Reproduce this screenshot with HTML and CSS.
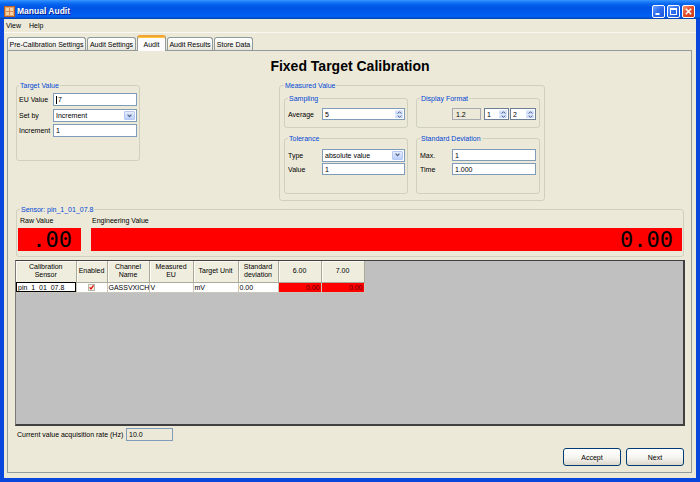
FILE: index.html
```html
<!DOCTYPE html>
<html>
<head>
<meta charset="utf-8">
<title>Manual Audit</title>
<link rel="stylesheet" href="styles.css">
</head>
<body>
<div class="window">
  <div class="titlebar">
    <svg class="app-icon" width="11" height="11" viewBox="0 0 11 11">
      <rect x="0.5" y="0.5" width="10" height="10" fill="#e9a46a" stroke="#b4622a"/>
      <rect x="2" y="2" width="7" height="7" fill="#f6d3a8"/>
      <path d="M2 5.5h7M5.5 2v7" stroke="#d98a4a" stroke-width="1"/>
    </svg>
    <span class="title">Manual Audit</span>
    <div class="tb-buttons">
      <span class="tb-btn"><svg width="11" height="11" viewBox="0 0 11 11"><rect x="2.5" y="7" width="4" height="2" fill="#fff"/></svg></span>
      <span class="tb-btn"><svg width="11" height="11" viewBox="0 0 11 11"><rect x="2.5" y="2.5" width="6" height="6" fill="none" stroke="#fff" stroke-width="1"/><rect x="2" y="2" width="7" height="2" fill="#fff"/></svg></span>
      <span class="tb-btn close"><svg width="11" height="11" viewBox="0 0 11 11"><path d="M2.8 2.8l5.4 5.4M8.2 2.8l-5.4 5.4" stroke="#fff" stroke-width="1.6"/></svg></span>
    </div>
  </div>
  <div class="frame">
    <div class="menubar"><span>View</span><span>Help</span></div>
    <div class="tabs">
      <div class="tab t1">Pre-Calibration Settings</div>
      <div class="tab t2">Audit Settings</div>
      <div class="tab t3 active">Audit</div>
      <div class="tab t4">Audit Results</div>
      <div class="tab t5">Store Data</div>
    </div>
    <div class="panel">
      <h1 class="heading">Fixed Target Calibration</h1>
      <div class="top-row">
        <fieldset class="group target-group">
          <legend>Target Value</legend>
          <div class="field-row"><span class="lbl">EU Value</span><span class="textbox w84"><span class="caret"></span>7</span></div>
          <div class="field-row mt3"><span class="lbl">Set by</span>
            <span class="combo w84"><span class="combo-val">Increment</span><span class="combo-btn"><svg width="5" height="4" viewBox="0 0 5 4"><path d="M0.6 0.7L2.5 2.7L4.4 0.7" fill="none" stroke="#4d6185" stroke-width="1.2"/></svg></span></span>
          </div>
          <div class="field-row mt2"><span class="lbl">Increment</span><span class="textbox w84">1</span></div>
        </fieldset>
        <fieldset class="group measured-group">
          <legend>Measured Value</legend>
          <div class="sub-grid">
            <fieldset class="group sub short">
              <legend>Sampling</legend>
              <div class="field-row h12"><span class="lbl">Average</span>
                <span class="spin w83"><span class="spin-val">5</span><span class="spin-btns"><span class="sb"><svg width="5" height="3" viewBox="0 0 5 3"><path d="M0.7 2.5L2.5 0.7L4.3 2.5" fill="none" stroke="#4d6185" stroke-width="1"/></svg></span><span class="sb"><svg width="5" height="3" viewBox="0 0 5 3"><path d="M0.7 0.5L2.5 2.3L4.3 0.5" fill="none" stroke="#4d6185" stroke-width="1"/></svg></span></span></span>
              </div>
            </fieldset>
            <fieldset class="group sub short">
              <legend>Display Format</legend>
              <div class="field-row h12 fmt-row">
                <span class="readonly w29">1.2</span>
                <span class="spin w25 dark"><span class="spin-val">1</span><span class="spin-btns"><span class="sb"><svg width="5" height="3" viewBox="0 0 5 3"><path d="M0.7 2.5L2.5 0.7L4.3 2.5" fill="none" stroke="#4d6185" stroke-width="1"/></svg></span><span class="sb"><svg width="5" height="3" viewBox="0 0 5 3"><path d="M0.7 0.5L2.5 2.3L4.3 0.5" fill="none" stroke="#4d6185" stroke-width="1"/></svg></span></span></span>
                <span class="spin w26 dark"><span class="spin-val">2</span><span class="spin-btns"><span class="sb"><svg width="5" height="3" viewBox="0 0 5 3"><path d="M0.7 2.5L2.5 0.7L4.3 2.5" fill="none" stroke="#4d6185" stroke-width="1"/></svg></span><span class="sb"><svg width="5" height="3" viewBox="0 0 5 3"><path d="M0.7 0.5L2.5 2.3L4.3 0.5" fill="none" stroke="#4d6185" stroke-width="1"/></svg></span></span></span>
              </div>
            </fieldset>
            <fieldset class="group sub tall">
              <legend>Tolerance</legend>
              <div class="field-row h12"><span class="lbl">Type</span>
                <span class="combo w83 h12"><span class="combo-val">absolute value</span><span class="combo-btn"><svg width="5" height="4" viewBox="0 0 5 4"><path d="M0.6 0.7L2.5 2.7L4.4 0.7" fill="none" stroke="#4d6185" stroke-width="1.2"/></svg></span></span>
              </div>
              <div class="field-row h12 mt2"><span class="lbl">Value</span><span class="textbox w83 h12">1</span></div>
            </fieldset>
            <fieldset class="group sub tall stddev">
              <legend>Standard Deviation</legend>
              <div class="field-row h12"><span class="lbl">Max.</span><span class="textbox w84 h12">1</span></div>
              <div class="field-row h12 mt2"><span class="lbl">Time</span><span class="textbox w84 h12">1.000</span></div>
            </fieldset>
          </div>
        </fieldset>
      </div>
      <fieldset class="group sensor-group">
        <legend>Sensor: pin_1_01_07.8</legend>
        <div class="sensor-cols">
          <div class="sensor-col raw">
            <div class="sensor-lbl">Raw Value</div>
            <div class="digital">.00</div>
          </div>
          <div class="sensor-col eng">
            <div class="sensor-lbl eng-lbl">Engineering Value</div>
            <div class="digital">0.00</div>
          </div>
        </div>
      </fieldset>
      <div class="datagrid">
        <table class="grid-table">
          <colgroup>
            <col class="c60"><col class="c31"><col class="c42"><col class="c44"><col class="c45"><col class="c40"><col class="c43"><col class="c43">
          </colgroup>
          <thead>
            <tr>
              <th>Calibration<br>Sensor</th>
              <th>Enabled</th>
              <th>Channel<br>Name</th>
              <th>Measured<br>EU</th>
              <th>Target Unit</th>
              <th>Standard<br>deviation</th>
              <th>6.00</th>
              <th>7.00</th>
            </tr>
          </thead>
          <tbody>
            <tr>
              <td class="focus">pin_1_01_07.8</td>
              <td class="center"><svg class="chk" width="7" height="7" viewBox="0 0 7 7"><rect x="0.5" y="0.5" width="6" height="6" fill="#f3f1e6" stroke="#b9b7a8"/><path d="M1.6 3.4L3 5L5.6 1.4" fill="none" stroke="#e21010" stroke-width="1.3"/></svg></td>
              <td>GASSVXICH</td>
              <td>V</td>
              <td>mV</td>
              <td>0.00</td>
              <td class="red">0.00</td>
              <td class="red">0.00</td>
            </tr>
          </tbody>
        </table>
      </div>
      <div class="rate-row">
        <span class="rate-lbl">Current value acquisition rate (Hz)</span>
        <span class="rate-box">10.0</span>
      </div>
      <div class="btn-row">
        <span class="btn">Accept</span>
        <span class="btn">Next</span>
      </div>
    </div>
  </div>
</div>
</body>
</html>
```
FILE: styles.css
```css
* { box-sizing: border-box; }
html, body { margin: 0; padding: 0; }
body {
  width: 700px;
  height: 482px;
  overflow: hidden;
  font-family: "Liberation Sans", Arial, sans-serif;
  font-size: 7px;
  line-height: 9px;
  color: #000;
  background: #ece9d8;
}
.window {
  width: 700px;
  height: 482px;
  display: flex;
  flex-direction: column;
}
.titlebar {
  flex: none;
  height: 19px;
  display: flex;
  align-items: center;
  padding: 3px 5px 0 4px;
  background: linear-gradient(to bottom, #3d95ff 0%, #1a7cfa 10%, #0564ee 22%, #0055e5 40%, #0057ea 60%, #005cf2 75%, #0063f3 85%, #0052d6 93%, #0040ab 100%);
}
.app-icon { flex: none; margin-right: 2px; }
.title {
  flex: 1;
  color: #fff;
  font-weight: bold;
  font-size: 8.5px;
  line-height: 11px;
  text-shadow: 1px 1px 0 #0a1a8a;
}
.tb-buttons { display: flex; gap: 2px; }
.tb-btn {
  width: 13px;
  height: 13px;
  border: 1px solid #fff;
  border-radius: 2px;
  background: linear-gradient(135deg, #6ea2ff 0%, #2f6ff0 45%, #1c55d8 100%);
  display: flex;
  align-items: center;
  justify-content: center;
}
.tb-btn.close { background: linear-gradient(135deg, #f39a7a 0%, #e2502a 45%, #c93a14 100%); }

.frame {
  flex: 1;
  min-height: 0;
  display: flex;
  flex-direction: column;
  background: #ece9d8;
  border: 4px solid #0846dc;
  border-top: 0;
}
.menubar {
  flex: none;
  height: 14px;
  display: flex;
  align-items: center;
  gap: 8px;
  padding: 0 0 1px 2px;
  border-bottom: 1px solid #f9f8f2;
}
.tabs {
  flex: none;
  height: 17px;
  display: flex;
  align-items: flex-end;
  gap: 1px;
  padding-left: 3px;
}
.tab {
  height: 13px;
  display: flex;
  align-items: center;
  justify-content: center;
  border: 1px solid #919b9c;
  border-bottom: 0;
  border-radius: 3px 3px 0 0;
  background: linear-gradient(#ffffff, #f4f3ee 60%, #e6e4da);
  white-space: nowrap;
}
.tab.active {
  height: 16px;
  margin-bottom: -1px;
  position: relative;
  z-index: 2;
  background: #fcfcfe;
  border-top: 2px solid #f0a436;
  box-shadow: inset 0 1px 0 #ffc83c;
}
.t1 { width: 79px; }
.t2 { width: 49px; }
.t3 { width: 29px; }
.t4 { width: 46px; }
.t5 { width: 39px; }

.panel {
  flex: 1;
  min-height: 0;
  margin: 0 4px 5px 3px;
  border: 1px solid #919b9c;
  background: #ece9d8;
  display: flex;
  flex-direction: column;
  padding: 0 6px 6px 7px;
}
.heading {
  flex: none;
  margin: 7px 0 0;
  font-size: 14px;
  line-height: 16px;
  font-weight: bold;
  text-align: center;
}
.top-row {
  flex: none;
  display: flex;
  align-items: flex-start;
  margin-top: 7px;
}
.group {
  margin: 0;
  min-width: 0;
  border: 1px solid #d0d0bf;
  border-radius: 3px;
}
legend {
  padding: 0 1px;
  color: #0046d5;
  font-size: 7px;
  line-height: 9px;
}
.target-group {
  width: 124px;
  height: 80px;
  margin-left: 1px;
  padding: 3px 2px 0;
}
.measured-group {
  width: 266px;
  height: 120px;
  margin-left: 139px;
  padding: 4px 4px 0;
}
.field-row {
  display: flex;
  align-items: center;
  height: 13px;
}
.field-row.h12 { height: 12px; }
.mt2 { margin-top: 2px; }
.mt3 { margin-top: 3px; }
.lbl { flex: none; white-space: nowrap; }
.target-group .lbl { width: 34px; }
.sub .lbl { width: 34px; }
.stddev .lbl { width: 32px; }

.w84 { width: 84px; }
.w83 { width: 83px; }
.w29 { width: 29px; }
.w25 { width: 25px; }
.w26 { width: 26px; }

.textbox {
  height: 13px;
  border: 1px solid #7f9db9;
  background: #fff;
  padding: 0 2px;
  display: flex;
  align-items: center;
}
.h12 { height: 12px; }
.caret {
  display: inline-block;
  width: 1px;
  height: 8px;
  background: #000;
  margin-right: 1px;
}
.combo {
  height: 13px;
  display: flex;
  border: 1px solid #7f9db9;
  background: #fff;
}
.combo-val {
  flex: 1;
  padding-left: 2px;
  display: flex;
  align-items: center;
}
.combo-btn {
  width: 11px;
  margin: 1px;
  border: 1px solid #b7c9f3;
  border-radius: 1px;
  background: linear-gradient(#e4ecfd, #bccffa);
  display: flex;
  align-items: center;
  justify-content: center;
}
.spin {
  height: 12px;
  display: flex;
  border: 1px solid #7f9db9;
  background: #fff;
}
.spin.dark { border-color: #6d7f97; }
.spin-val {
  flex: 1;
  padding-left: 2px;
  display: flex;
  align-items: center;
}
.spin-btns {
  width: 9px;
  display: flex;
  flex-direction: column;
  padding: 1px 1px 1px 0;
}
.sb {
  flex: 1;
  border-radius: 1px;
  background: linear-gradient(#e6eefd, #c3d4fb);
  display: flex;
  align-items: center;
  justify-content: center;
}
.readonly {
  height: 12px;
  border: 1px solid #a7abb0;
  background: #ece9d8;
  padding-left: 3px;
  display: flex;
  align-items: center;
}
.sub-grid {
  display: grid;
  grid-template-columns: 124px 124px;
  column-gap: 8px;
  row-gap: 6px;
}
.sub { padding: 5px 2px 0 3px; }
.sub.short { height: 34px; }
.sub.tall { height: 60px; padding-top: 6px; }
.fmt-row {
  justify-content: flex-end;
  padding-right: 1px;
}
.fmt-row .readonly { margin-right: 3px; }
.fmt-row .spin + .spin { margin-left: 1px; }

.sensor-group {
  flex: none;
  height: 52px;
  margin: 4px 1px 0 1px;
  padding: 2px 1px 0 1px;
}
.sensor-group legend { margin-left: 2px; }
.sensor-cols { display: flex; gap: 10px; }
.sensor-col.raw { width: 63px; flex: none; }
.sensor-col.eng { flex: 1; }
.sensor-lbl {
  height: 9px;
  padding-left: 2px;
  margin-bottom: 3px;
  white-space: nowrap;
}
.eng-lbl { padding-left: 1px; }
.digital {
  height: 23px;
  background: #ff0000;
  font-family: "DejaVu Sans Mono", "Liberation Mono", monospace;
  font-size: 22px;
  line-height: 23px;
  text-align: right;
  padding-right: 9px;
}

.datagrid {
  flex: 1;
  min-height: 0;
  margin-top: 3px;
  background: #c0c0c0;
  border-style: solid;
  border-color: #404040;
  border-width: 1px 2px 2px 1px;
  border-left-color: #7a7a7a;
}
.grid-table {
  border-collapse: collapse;
  table-layout: fixed;
  width: 348px;
}
.c60 { width: 60px; }
.c31 { width: 31px; }
.c42 { width: 42px; }
.c44 { width: 44px; }
.c45 { width: 45px; }
.c40 { width: 40px; }
.c43 { width: 43px; }
.grid-table th {
  height: 21px;
  padding: 0;
  font-weight: normal;
  font-size: 7px;
  line-height: 8px;
  text-align: center;
  background: #efedde;
  border-right: 1px solid #aba997;
  border-bottom: 1px solid #aba997;
  box-shadow: inset 1px 1px 0 #fbfaf4;
}
.grid-table td {
  height: 10px;
  padding: 0 1px;
  line-height: 9px;
  background: #fff;
  border-right: 1px solid #c9c7ba;
  border-bottom: 1px solid #c9c7ba;
  white-space: nowrap;
  overflow: hidden;
}
.grid-table td.focus {
  outline: 1px solid #000;
  outline-offset: -1px;
  padding-left: 2px;
}
.grid-table td.center { text-align: center; }
.grid-table td.red {
  background: #ff0000;
  text-align: right;
  color: #5a0000;
}
.chk { display: block; margin: 1px auto 0; }

.rate-row {
  flex: none;
  height: 13px;
  margin-top: 2px;
  padding-left: 2px;
  display: flex;
  align-items: center;
}
.rate-lbl { width: 109px; flex: none; white-space: nowrap; }
.rate-box {
  width: 47px;
  height: 13px;
  border: 1px solid #7f9db9;
  background: #ece9d8;
  padding-left: 2px;
  display: flex;
  align-items: center;
}
.btn-row {
  flex: none;
  display: flex;
  justify-content: flex-end;
  gap: 5px;
  margin-top: 7px;
  padding-right: 1px;
}
.btn {
  width: 58px;
  height: 18px;
  border: 1px solid #003c74;
  border-radius: 3px;
  background: linear-gradient(#ffffff, #f5f4ef 55%, #dcd7cc);
  display: flex;
  align-items: center;
  justify-content: center;
}
```
